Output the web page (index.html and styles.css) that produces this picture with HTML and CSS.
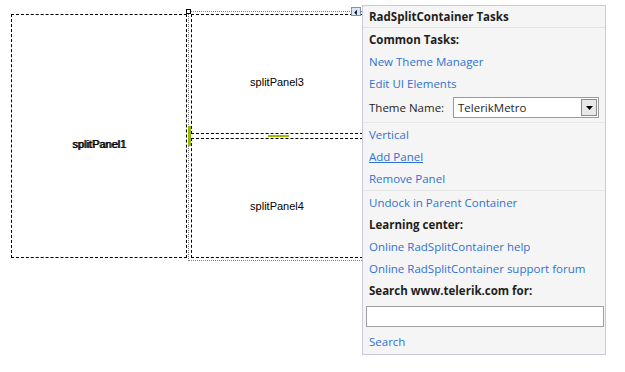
FILE: index.html
```html
<!DOCTYPE html>
<html lang="en">
  <head>
    <meta charset="UTF-8" />
    <title>RadSplitContainer Designer</title>
    <link rel="stylesheet" href="styles.css">
  </head>
  <body>
    <div class="designer">
      <div class="panel panel1">splitPanel1</div>
      <div class="split-container">
        <div class="panel">splitPanel3</div>
        <div class="panel">splitPanel4</div>
        <span class="handle"></span>
        <span class="grip grip-v"></span>
        <span class="grip grip-h"></span>
        <span class="smart-tag">
          <svg width="10" height="9" viewBox="0 0 10 9">
            <path d="M6 1 L3 4.5 L6 8 Z" fill="#000" />
          </svg>
        </span>
      </div>
    </div>

    <div class="tasks">
      <div class="tasks-header">RadSplitContainer Tasks</div>
      <div class="row title">Common Tasks:</div>
      <div class="row"><a href="#">New Theme Manager</a></div>
      <div class="row"><a href="#">Edit UI Elements</a></div>
      <div class="row theme-row sep">
        <span class="theme-label">Theme Name:</span>
        <div class="combo">
          <span class="combo-text">TelerikMetro</span>
          <span class="combo-btn">
            <svg width="7" height="4" viewBox="0 0 7 4">
              <path d="M0 0 H7 L3.5 4 Z" fill="#000" />
            </svg>
          </span>
        </div>
      </div>
      <div class="row"><a href="#">Vertical</a></div>
      <div class="row"><a href="#" class="hover">Add Panel</a></div>
      <div class="row sep remove-row"><a href="#">Remove Panel</a></div>
      <div class="row"><a href="#">Undock in Parent Container</a></div>
      <div class="row title">Learning center:</div>
      <div class="row"><a href="#">Online RadSplitContainer help</a></div>
      <div class="row"><a href="#">Online RadSplitContainer support forum</a></div>
      <div class="row title">Search www.telerik.com for:</div>
      <div class="search-row"><input type="text" class="search-input" /></div>
      <div class="row"><a href="#">Search</a></div>
    </div>
  </body>
</html>
```

FILE: styles.css
```css
* {
  margin: 0;
  padding: 0;
  box-sizing: border-box;
}

body {
  background: #fff;
  font-family: "Liberation Sans", Arial, sans-serif;
  font-size: 11px;
  color: #000;
}

.designer {
  display: flex;
  align-items: flex-start;
  padding: 14px 0 0 11px;
}

.panel {
  display: flex;
  justify-content: center;
  align-items: center;
  padding-top: 16px;
  border: 1px dashed #000;
}

.panel1 {
  width: 176px;
  height: 244px;
  margin-right: 1px;
  text-shadow: 1px 0 0 #000;
}

.split-container {
  position: relative;
  display: flex;
  flex-direction: column;
  gap: 4px;
  margin-top: -3px;
  padding: 2px;
  border: 1px dotted #808080;
}

.split-container .panel {
  width: 172px;
  height: 120px;
}

.handle {
  position: absolute;
  left: -3px;
  top: -3px;
  width: 5px;
  height: 5px;
  background: #fff;
  border: 1px solid #000;
}

.grip {
  position: absolute;
  background: #99bb00;
}

.grip-v {
  left: -1px;
  top: 114px;
  width: 3px;
  height: 20px;
}

.grip-h {
  left: 79px;
  top: 123px;
  width: 21px;
  height: 2px;
}

.smart-tag {
  position: absolute;
  left: 162px;
  top: -5px;
  display: flex;
  width: 10px;
  height: 9px;
  background: #d6e6f6;
  border: 1px solid #7a93b3;
}

.tasks {
  position: absolute;
  left: 362px;
  top: 5px;
  width: 244px;
  height: 350px;
  background: #f5f5f5;
  border: 1px solid #c9c9dc;
  font-family: "Open Sans", "Segoe UI", sans-serif;
  font-size: 11.5px;
}

.tasks-header {
  height: 22px;
  padding: 3px 6px 0;
  font-weight: bold;
  color: #1e1e1e;
  border-bottom: 1px solid #e2e2e6;
}

.row {
  display: flex;
  align-items: center;
  height: 22px;
  padding: 0 6px;
  color: #1e1e1e;
  white-space: nowrap;
}

.row.title {
  font-weight: bold;
}

.row.sep {
  border-bottom: 1px solid #e6e6e6;
}

.remove-row {
  height: 24px;
  padding-bottom: 1px;
}

.row a {
  color: #2f72d3;
  text-decoration: none;
}

.row a.hover {
  text-decoration: underline;
}

.theme-row {
  height: 29px;
  padding-bottom: 1px;
}

.theme-label {
  width: 84px;
  flex-shrink: 0;
}

.combo {
  display: flex;
  align-items: center;
  justify-content: space-between;
  width: 150px;
  height: 21px;
  padding: 0 1px 0 4px;
  background: #fff;
  border: 1px solid #9a9a9a;
}

.combo-btn {
  display: flex;
  align-items: center;
  justify-content: center;
  width: 16px;
  height: 17px;
  background: #e8e8e8;
  border: 1px solid #8a8a8a;
}

.search-row {
  height: 29px;
  padding: 5px 0 0 3px;
}

.search-input {
  display: block;
  width: 238px;
  height: 21px;
  background: #fff;
  border: 1px solid #a0a0a0;
}
```
